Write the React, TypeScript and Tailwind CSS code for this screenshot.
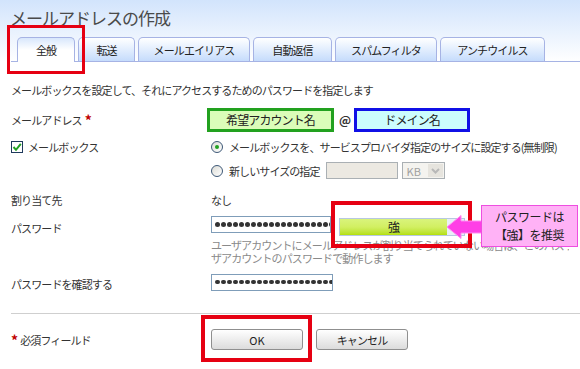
import clsx from "clsx";

const TABS = [
  { label: "全般", width: "w-[58px]", active: true },
  { label: "転送", width: "w-[57px]" },
  { label: "メールエイリアス", width: "w-[112px]" },
  { label: "自動返信", width: "w-[79px]" },
  { label: "スパムフィルタ", width: "w-[102px]" },
  { label: "アンチウイルス", width: "w-[105px]" },
];

function Dots({ count }: { count: number }) {
  return (
    <div className="flex items-center gap-[1.5px] pl-[3px]">
      {Array.from({ length: count }).map((_, i) => (
        <span key={i} className="h-[4.5px] w-[4.5px] shrink-0 rounded-full bg-[#333]" />
      ))}
    </div>
  );
}

function Radio({ checked }: { checked?: boolean }) {
  return (
    <span className="flex h-[12px] w-[12px] shrink-0 items-center justify-center rounded-full border border-[#3d5877] bg-gradient-to-br from-[#dcdcd6] to-white">
      {checked && <span className="h-[4px] w-[4px] rounded-full bg-[#21a121]" />}
    </span>
  );
}

export default function App() {
  return (
    <div className="relative h-[369px] w-[580px] overflow-hidden bg-white text-[11px] leading-[16px] tracking-[-0.9px] text-[#333] [font-family:'Noto_Sans_CJK_JP',sans-serif]">
      <div className="bg-gradient-to-b from-[#d2e4fc] to-white">
        <div className="h-[37px] pl-[10px] pt-[7px] text-[17px] leading-[22px] tracking-[-1px] text-[#4a4a4a]">
          メールアドレスの作成
        </div>
        <div className="ml-[11px] flex h-[25px] items-end gap-[3px] border-b border-[#a6b3e4] pl-[6px]">
          {TABS.map((tab) => (
            <div
              key={tab.label}
              className={clsx(
                "flex shrink-0 items-center justify-center rounded-t-[5px] border border-b-0 border-[#a6b3e4] text-[11px] text-[#222]",
                tab.width,
                tab.active
                  ? "-mb-px h-[25px] bg-gradient-to-b from-[#d8e7fc] via-white to-white pb-px"
                  : "h-[24px] bg-gradient-to-b from-white to-[#c5dcfc]"
              )}
            >
              {tab.label}
            </div>
          ))}
        </div>
      </div>

      <div className="pl-[11px]">
        <div className="mt-[20px] leading-[16px]">
          メールボックスを設定して、それにアクセスするためのパスワードを指定します
        </div>

        <div className="mt-[10px] grid h-[24px] grid-cols-[200px_1fr] items-center">
          <div className="flex items-center">
            メールアドレス<span className="ml-[3px] text-[14px] font-bold leading-[16px] text-[#c00000]">*</span>
          </div>
          <div className="flex items-center">
            <div className="-ml-[4px] flex h-[24px] w-[127px] items-center justify-center border-[3px] border-[#22a11f] bg-[#dbfdb9] text-[12px] text-[#222]">
              希望アカウント名
            </div>
            <span className="ml-[5px] text-[12px] font-bold tracking-normal">@</span>
            <div className="ml-[3px] flex h-[24px] w-[116px] items-center justify-center border-[3px] border-[#1010e6] bg-[#ccfdfd] text-[12px] text-[#222]">
              ドメイン名
            </div>
          </div>
        </div>

        <div className="mt-[7px] grid h-[16px] grid-cols-[200px_1fr] items-center">
          <div className="flex items-center gap-[5px]">
            <span className="flex h-[12px] w-[12px] items-center justify-center border border-[#1f3a5c] bg-white">
              <svg width="10" height="10" viewBox="0 0 10 10">
                <path d="M1.5 5 L4 7.8 L8.8 1.8" fill="none" stroke="#21a121" strokeWidth="2" />
              </svg>
            </span>
            メールボックス
          </div>
          <div className="flex items-center gap-[6px] whitespace-nowrap">
            <Radio checked />
            <span>メールボックスを、サービスプロバイダ指定のサイズに設定する(無制限)</span>
          </div>
        </div>

        <div className="mt-[7px] grid h-[17px] grid-cols-[200px_1fr] items-center">
          <div />
          <div className="flex items-center">
            <Radio />
            <span className="ml-[6px] whitespace-nowrap">新しいサイズの指定</span>
            <div className="ml-[6px] h-[17px] w-[72px] border border-[#aab0b4] bg-[#ece9e2]" />
            <div className="ml-[4px] flex h-[17px] w-[43px] items-center border border-[#aab0b4] bg-[#f4f3ef]">
              <span className="flex-1 pl-[4px] text-[11px] tracking-normal text-[#a0a0a0]">KB</span>
              <span className="mr-px flex h-[13px] w-[15px] items-center justify-center bg-[#e6e4de]">
                <svg width="9" height="6" viewBox="0 0 9 6">
                  <path d="M1 1 L4.5 4.5 L8 1" fill="none" stroke="#b8b8b8" strokeWidth="2" />
                </svg>
              </span>
            </div>
          </div>
        </div>

        <div className="mt-[13px] grid h-[16px] grid-cols-[200px_1fr] items-center">
          <div>割り当て先</div>
          <div>なし</div>
        </div>

        <div className="mt-[8px] grid h-[17px] grid-cols-[200px_1fr] items-center">
          <div className="pt-[3px]">パスワード</div>
          <div className="flex items-start">
            <div className="flex h-[17px] w-[120px] items-center overflow-hidden border border-[#7f9db9] bg-white">
              <Dots count={20} />
            </div>
            <div className="ml-[8px] mt-[2px] flex h-[18px] w-[126px] border border-[#b7c8e0] bg-[#e8eef7]">
              <div className="flex w-[107px] items-center justify-center bg-gradient-to-b from-[#d9f47c] via-[#d2ef62] to-[#b5e000] text-[12px] text-[#222]">
                強
              </div>
            </div>
          </div>
        </div>

        <div className="mt-[6px] grid grid-cols-[200px_1fr] leading-[13px] text-[#8a8a8a]">
          <div />
          <div className="w-[358px] overflow-hidden whitespace-nowrap">
            <div>ユーザアカウントにメールアドレスが割り当てられていない場合は、このパスワードはユー</div>
            <div>ザアカウントのパスワードで動作します</div>
          </div>
        </div>

        <div className="mt-[7px] grid h-[17px] grid-cols-[200px_1fr] items-center">
          <div className="pt-[4px]">パスワードを確認する</div>
          <div className="flex h-[17px] w-[122px] items-center overflow-hidden border border-[#7f9db9] bg-white">
            <Dots count={20} />
          </div>
        </div>
      </div>

      <div className="ml-[11px] mt-[24px] h-px bg-[#cfcfcf]" />

      <div className="mt-[15px] grid h-[21px] grid-cols-[200px_1fr] items-center pl-[11px]">
        <div className="flex items-center">
          <span className="mr-[3px] text-[14px] font-bold leading-[16px] text-[#c00000]">*</span>必須フィールド
        </div>
        <div className="flex items-center gap-[13px]">
          <button
            type="button"
            className="h-[21px] w-[92px] rounded-[3px] border border-[#8f8f8f] bg-gradient-to-b from-white to-[#dcdcdc] text-[11px] tracking-normal text-[#222]"
          >
            OK
          </button>
          <button
            type="button"
            className="h-[21px] w-[92px] rounded-[3px] border border-[#8f8f8f] bg-gradient-to-b from-white to-[#dcdcdc] text-[11px] text-[#222]"
          >
            キャンセル
          </button>
        </div>
      </div>

      {/* annotation overlays */}
      <div className="absolute left-[7px] top-[25px] h-[49px] w-[78px] border-[3px] border-[#e60012]" />
      <div className="absolute left-[331px] top-[201px] h-[47px] w-[141px] border-[4px] border-[#e60012]" />
      <div className="absolute left-[201px] top-[315px] h-[47px] w-[111px] border-[4px] border-[#e60012]" />

      <svg className="absolute left-[445px] top-[214px]" width="38" height="26" viewBox="0 0 38 26">
        <path d="M2 13 L16 1.5 L16 7 L37 7 L37 19 L16 19 L16 24.5 Z" fill="#ff3fe6" stroke="#ff8cf0" strokeWidth="1" />
      </svg>
      <div className="absolute left-[481px] top-[205px] flex h-[42px] w-[97px] flex-col items-center justify-center border border-[#ee4ee0] bg-[#ffb2f6] text-[12px] leading-[18px] tracking-[-0.5px] text-[#222]">
        <div>パスワードは</div>
        <div>【強】を推奨</div>
      </div>
    </div>
  );
}
